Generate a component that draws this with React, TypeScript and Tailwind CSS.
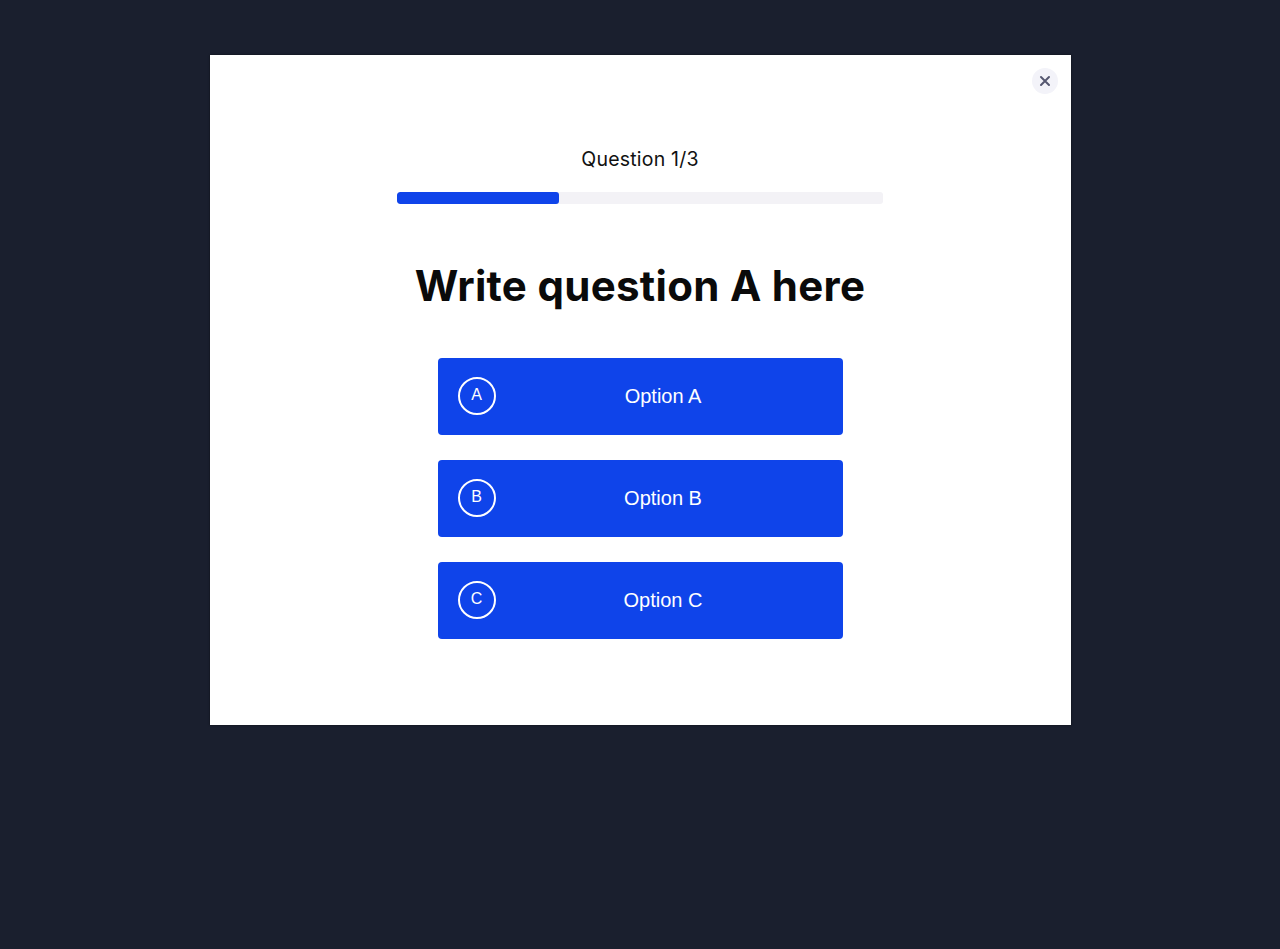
import React from 'react';

const options = [
  { key: 'A', label: 'Option A' },
  { key: 'B', label: 'Option B' },
  { key: 'C', label: 'Option C' },
];

const OptionButton = ({ letter, label }: { letter: string; label: string }) => (
  <button className="w-[405px] h-[77px] bg-[#0f44ea] rounded-[4px] flex items-center pl-[20px] pr-[12px] text-white font-['Liberation_Sans',Arial,sans-serif]">
    <span className="w-[38px] h-[38px] rounded-full border-2 border-white flex items-center justify-center text-[16px] leading-none pb-[3px]">
      {letter}
    </span>
    <span className="flex-1 text-center text-[20px] leading-none">{label}</span>
  </button>
);

export default function App() {
  const current = 1;
  const total = 3;

  return (
    <div className="min-h-[949px] w-full bg-[#1a1f2e] pt-[55px] font-['Inter',sans-serif]">
      <div className="relative mx-auto w-[861px] h-[670px] bg-white shadow-[0_0_2px_rgba(0,0,0,0.6)] flex flex-col items-center">
        <button className="absolute right-[13px] top-[13px] w-[26px] h-[26px] rounded-full bg-[#f3f3f9] flex items-center justify-center text-[#555770]">
          <svg width="12" height="12" viewBox="0 0 12 12" fill="none" stroke="currentColor" strokeWidth="2" strokeLinecap="round">
            <path d="M2 2l8 8M10 2l-8 8" />
          </svg>
        </button>

        <p className="mt-[95px] text-[19.5px] leading-none text-[#111] tracking-[0.2px]">
          Question {current}/{total}
        </p>

        <div className="mt-[22px] w-[486px] h-[12px] rounded-[3px] bg-[#f3f2f6] overflow-hidden">
          <div className="h-full bg-[#0f44ea] rounded-[3px]" style={{ width: `${(current / total) * 100}%` }} />
        </div>

        <h1 className="mt-[61px] text-[42px] leading-none font-bold text-[#0a0a0a] tracking-[0.3px]">
          Write question A here
        </h1>

        <div className="mt-[51px] flex flex-col gap-[25px]">
          {options.map((o) => (
            <OptionButton key={o.key} letter={o.key} label={o.label} />
          ))}
        </div>
      </div>
    </div>
  );
}
